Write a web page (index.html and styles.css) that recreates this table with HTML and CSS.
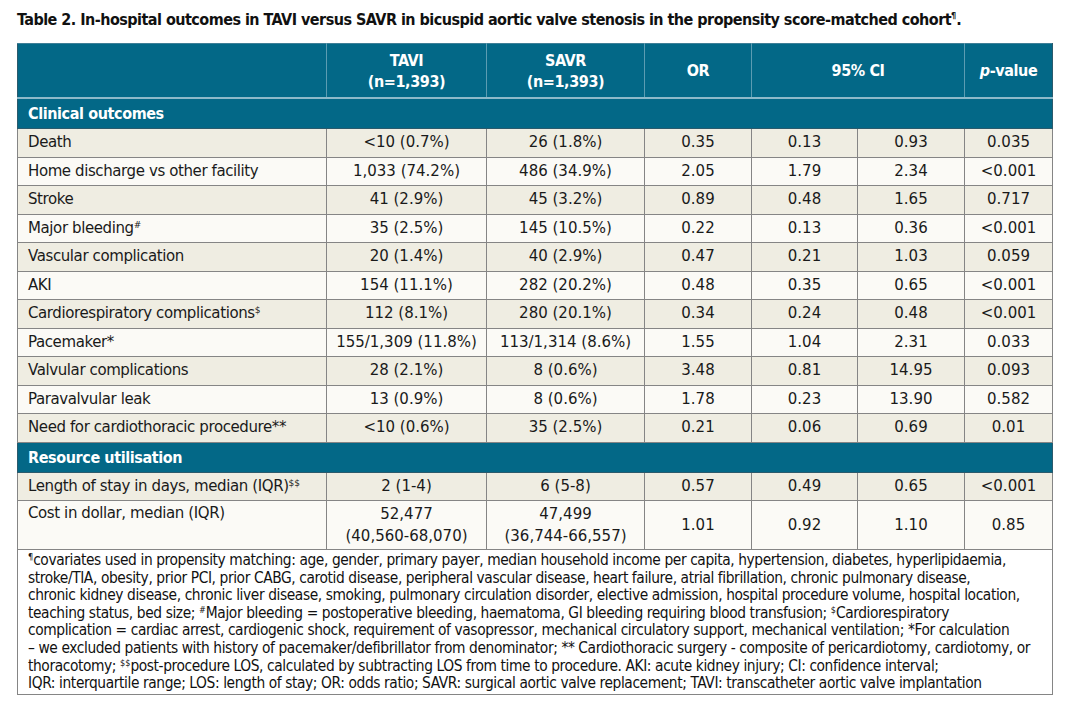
FILE: index.html
```html
<!DOCTYPE html>
<html>
<head>
<meta charset="utf-8">
<link rel="stylesheet" href="styles.css">
</head>
<body>
<div class="page">
  <h1 class="title">Table 2. In-hospital outcomes in TAVI versus SAVR in bicuspid aortic valve stenosis in the propensity score-matched cohort<sup>¶</sup>.</h1>
  <table class="tbl">
    <colgroup>
      <col class="c1"><col class="c2"><col class="c3"><col class="c4"><col class="c5"><col class="c6"><col class="c7">
    </colgroup>
    <thead>
      <tr class="head">
        <th></th>
        <th>TAVI<br>(n=1,393)</th>
        <th>SAVR<br>(n=1,393)</th>
        <th>OR</th>
        <th colspan="2">95% CI</th>
        <th><i>p</i>-value</th>
      </tr>
    </thead>
    <tbody>
      <tr class="sect"><td colspan="7">Clinical outcomes</td></tr>
      <tr class="odd"><td>Death</td><td>&lt;10 (0.7%)</td><td>26 (1.8%)</td><td>0.35</td><td>0.13</td><td>0.93</td><td>0.035</td></tr>
      <tr class="even"><td>Home discharge vs other facility</td><td>1,033 (74.2%)</td><td>486 (34.9%)</td><td>2.05</td><td>1.79</td><td>2.34</td><td>&lt;0.001</td></tr>
      <tr class="odd"><td>Stroke</td><td>41 (2.9%)</td><td>45 (3.2%)</td><td>0.89</td><td>0.48</td><td>1.65</td><td>0.717</td></tr>
      <tr class="even"><td>Major bleeding<sup>#</sup></td><td>35 (2.5%)</td><td>145 (10.5%)</td><td>0.22</td><td>0.13</td><td>0.36</td><td>&lt;0.001</td></tr>
      <tr class="odd"><td>Vascular complication</td><td>20 (1.4%)</td><td>40 (2.9%)</td><td>0.47</td><td>0.21</td><td>1.03</td><td>0.059</td></tr>
      <tr class="even"><td>AKI</td><td>154 (11.1%)</td><td>282 (20.2%)</td><td>0.48</td><td>0.35</td><td>0.65</td><td>&lt;0.001</td></tr>
      <tr class="odd"><td>Cardiorespiratory complications<sup>$</sup></td><td>112 (8.1%)</td><td>280 (20.1%)</td><td>0.34</td><td>0.24</td><td>0.48</td><td>&lt;0.001</td></tr>
      <tr class="even"><td>Pacemaker*</td><td>155/1,309 (11.8%)</td><td>113/1,314 (8.6%)</td><td>1.55</td><td>1.04</td><td>2.31</td><td>0.033</td></tr>
      <tr class="odd"><td>Valvular complications</td><td>28 (2.1%)</td><td>8 (0.6%)</td><td>3.48</td><td>0.81</td><td>14.95</td><td>0.093</td></tr>
      <tr class="even"><td>Paravalvular leak</td><td>13 (0.9%)</td><td>8 (0.6%)</td><td>1.78</td><td>0.23</td><td>13.90</td><td>0.582</td></tr>
      <tr class="odd"><td>Need for cardiothoracic procedure**</td><td>&lt;10 (0.6%)</td><td>35 (2.5%)</td><td>0.21</td><td>0.06</td><td>0.69</td><td>0.01</td></tr>
      <tr class="sect"><td colspan="7">Resource utilisation</td></tr>
      <tr class="odd"><td>Length of stay in days, median (IQR)<sup>$$</sup></td><td>2 (1-4)</td><td>6 (5-8)</td><td>0.57</td><td>0.49</td><td>0.65</td><td>&lt;0.001</td></tr>
      <tr class="even tall"><td class="top">Cost in dollar, median (IQR)</td><td>52,477<br>(40,560-68,070)</td><td>47,499<br>(36,744-66,557)</td><td>1.01</td><td>0.92</td><td>1.10</td><td>0.85</td></tr>
      <tr class="foot"><td colspan="7"><sup>¶</sup>covariates used in propensity matching: age, gender, primary payer, median household income per capita, hypertension, diabetes, hyperlipidaemia,<br>stroke/TIA, obesity, prior PCI, prior CABG, carotid disease, peripheral vascular disease, heart failure, atrial fibrillation, chronic pulmonary disease,<br>chronic kidney disease, chronic liver disease, smoking, pulmonary circulation disorder, elective admission, hospital procedure volume, hospital location,<br>teaching status, bed size; <sup>#</sup>Major bleeding = postoperative bleeding, haematoma, GI bleeding requiring blood transfusion; <sup>$</sup>Cardiorespiratory<br>complication = cardiac arrest, cardiogenic shock, requirement of vasopressor, mechanical circulatory support, mechanical ventilation; *For calculation<br>– we excluded patients with history of pacemaker/defibrillator from denominator; ** Cardiothoracic surgery - composite of pericardiotomy, cardiotomy, or<br>thoracotomy; <sup>$$</sup>post-procedure LOS, calculated by subtracting LOS from time to procedure. AKI: acute kidney injury; CI: confidence interval;<br>IQR: interquartile range; LOS: length of stay; OR: odds ratio; SAVR: surgical aortic valve replacement; TAVI: transcatheter aortic valve implantation</td></tr>
    </tbody>
  </table>
</div>
</body>
</html>
```
FILE: styles.css
```css
html, body {
  margin: 0;
  padding: 0;
  background: #ffffff;
}
.page {
  padding: 10px 17px 0 17px;
  width: 1035px;
}
.title {
  margin: 0 0 13px 0;
  font-family: "DejaVu Sans Condensed", "Liberation Sans", sans-serif;
  font-weight: bold;
  font-size: 16px;
  letter-spacing: -0.53px;
  line-height: 20px;
  color: #111;
  white-space: nowrap;
}
.title sup {
  font-size: 9px;
  line-height: 0;
  letter-spacing: 0;
}
.tbl {
  width: 1035px;
  border-collapse: collapse;
  table-layout: fixed;
  font-family: "DejaVu Sans", sans-serif;
  font-size: 15px;
  color: #1a1a1a;
}
.c1 { width: 309px; }
.c2 { width: 160px; }
.c3 { width: 158px; }
.c4 { width: 107px; }
.c5 { width: 106px; }
.c6 { width: 107px; }
.c7 { width: 88px; }
.head th {
  background: #036887;
  color: #ffffff;
  font-family: "DejaVu Sans Condensed", "Liberation Sans", sans-serif;
  font-weight: bold;
  font-size: 16px;
  letter-spacing: -0.4px;
  line-height: 21px;
  height: 53px;
  padding: 0;
  text-align: center;
  border-left: 1px solid #5c9cb2;
  border-right: 1px solid #5c9cb2;
  border-top: 1px solid #3e7f97;
  border-bottom: 2px solid #8db9c9;
}
.head th:first-child { border-left: 1px solid #2b5a6c; }
.head th:last-child { border-right: 1px solid #2b5a6c; }
.sect td {
  background: #036887;
  color: #ffffff;
  font-family: "DejaVu Sans Condensed", "Liberation Sans", sans-serif;
  font-weight: bold;
  font-size: 16px;
  letter-spacing: -0.6px;
  height: 29px;
  padding: 0 0 0 10px;
  text-align: left;
  border: 1px solid #2b5a6c;
}
tbody td {
  height: 27.5px;
  padding: 0;
  text-align: center;
  border: 1px solid #858585;
  line-height: 19px;
}
tbody td:first-child {
  text-align: left;
  padding-left: 10px;
  letter-spacing: -0.4px;
}
.odd td { background: #efede2; }
.even td { background: #fbfaf6; }
.tall td { height: 47px; padding-top: 0; padding-bottom: 0; line-height: 22px; }
.tall td.top { vertical-align: top; padding-top: 1px; }
tbody sup {
  font-size: 9px;
  line-height: 0;
  vertical-align: 5px;
  letter-spacing: 0;
}
.foot td {
  background: #ffffff;
  text-align: left;
  font-family: "DejaVu Sans Condensed", "Liberation Sans", sans-serif;
  font-size: 15.35px;
  line-height: 17.6px;
  white-space: nowrap;
  padding: 2px 4px 1px 5px;
  letter-spacing: 0;
  color: #111;
}
.foot sup {
  font-size: 9px;
  vertical-align: 5px;
}
```
